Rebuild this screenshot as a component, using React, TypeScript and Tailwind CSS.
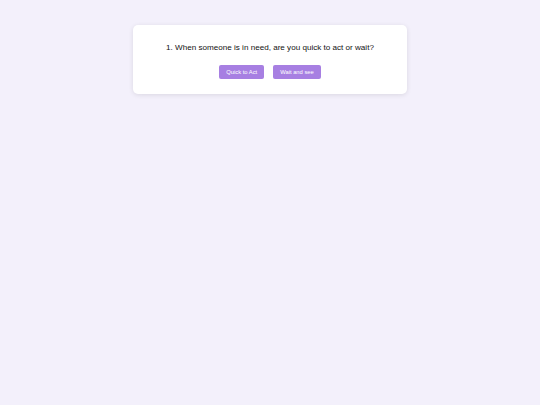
export default function App() {
  const options = ["Quick to Act", "Wait and see"];

  return (
    <div
      className="min-h-screen bg-[#f3f0fb] flex justify-center pt-[25px]"
      style={{ fontFamily: '"Liberation Sans", Arial, sans-serif' }}
    >
      <div className="w-[274px] h-[69px] bg-white rounded-[5px] shadow-[0_1px_5px_rgba(0,0,0,0.1)] flex flex-col items-center pt-[17px]">
        <p className="text-[8.1px] leading-[12px] text-[#111]">
          1. When someone is in need, are you quick to act or wait?
        </p>
        <div className="flex gap-[9px] mt-[11px]">
          {options.map((opt) => (
            <button
              key={opt}
              className="h-[14px] px-[7px] rounded-[2px] bg-[#a77fe2] text-white text-[5.8px] leading-[14px]"
            >
              {opt}
            </button>
          ))}
        </div>
      </div>
    </div>
  );
}
